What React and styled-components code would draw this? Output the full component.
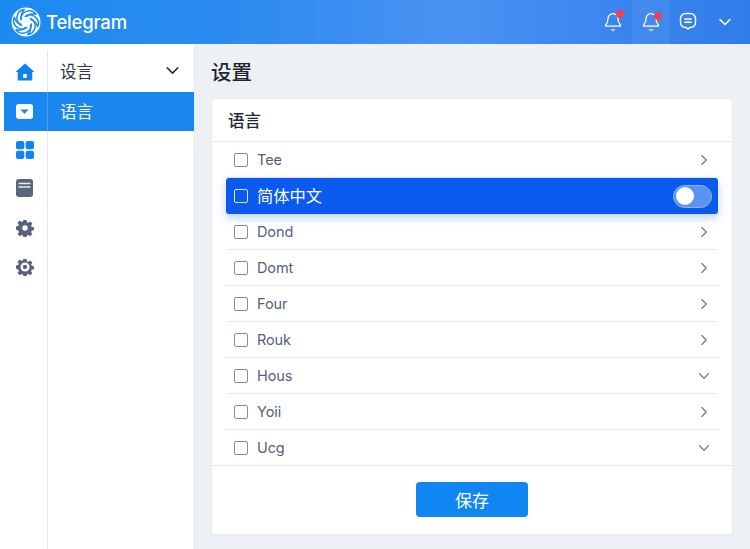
import React from 'react';
import styled, { createGlobalStyle } from 'styled-components';
import { ChevronDown, ChevronRight, Bell } from 'lucide-react';

const Global = createGlobalStyle`
  html, body { margin: 0; padding: 0; }
  body { width: 750px; height: 549px; overflow: hidden; background: #eef1f4; font-family: "Inter", "Noto Sans CJK SC", sans-serif; }
  * { box-sizing: border-box; }
`;
const Page = styled.div`display: flex; flex-direction: column; width: 750px; height: 549px;`;
const Header = styled.header`
  height: 44px; flex: none; display: flex; align-items: center; padding-left: 11px;
  background: linear-gradient(90deg, #1b8bf0 0%, #2f8bf0 35%, #4a92f2 60%, #3d86ef 80%, #2f7dea 100%);
`;
const Brand = styled.div`display: flex; align-items: center; gap: 5px; color: #fff; font-family: "Inter", sans-serif; font-size: 18.5px; font-weight: 500; letter-spacing: -0.2px;`;
const HeaderActions = styled.div`margin-left: auto; display: flex; align-items: stretch; height: 44px; padding-right: 7px;`;
const HeaderBtn = styled.div`
  width: ${p => p.$w}px; position: relative; display: flex; align-items: center; justify-content: center; color: #fff;
  padding-bottom: ${p => p.$lift || 0}px;
  background: ${p => (p.$active ? 'rgba(255,255,255,0.06)' : 'transparent')};
`;
const Dot = styled.span`position: absolute; top: ${p => p.$top}px; left: 22px; width: 8px; height: 8px; border-radius: 50%; background: #ee4058;`;
const Body = styled.div`flex: 1; display: flex; min-height: 0;`;
const Side = styled.aside`width: 195px; flex: none; background: #fff; display: flex; flex-direction: column; padding-top: 7px; border-right: 1px solid #e8ebf1; position: relative;`;
const SideRow = styled.div`
  display: grid; grid-template-columns: 44px 1fr; height: ${p => p.$h}px; margin-left: 4px; align-items: center;
  background: ${p => (p.$active ? '#1a87f0' : 'transparent')}; color: ${p => (p.$active ? '#fff' : '#4b5a70')};
`;
const RailIcon = styled.div`display: flex; justify-content: center; align-items: center; padding-right: 2px; height: 100%; border-right: 1px solid ${p => (p.$active ? '#4ba2f3' : '#e2e7f3')};`;
const SideLabel = styled.div`
  display: flex; align-items: center; justify-content: space-between; padding: 0 11px 2px 12px; height: 100%;
  font-size: 16.5px; color: ${p => (p.$active ? '#fff' : '#2f3541')};
`;
const Main = styled.main`flex: 1; display: flex; flex-direction: column; padding: 14px 18px 15px 17px; min-width: 0;`;
const Title = styled.h1`margin: 0 0 12px -1px; font-size: 20.5px; line-height: 29px; font-weight: 500; color: #20252e;`;
const Card = styled.section`flex: 1; background: #fff; border-radius: 4px; display: flex; flex-direction: column; box-shadow: 0 1px 4px rgba(60,80,120,.06);`;
const CardHead = styled.div`height: 43px; flex: none; padding: 0 16px 1px 16px; display: flex; align-items: center; font-size: 16.5px; font-weight: 500; color: #23272f; border-bottom: 1px solid #e3e7ef;`;
const List = styled.div`flex: 1; padding: 0 14px; display: flex; flex-direction: column;`;
const Row = styled.div`
  height: ${p => (p.$last ? 35 : 36)}px; display: flex; align-items: center; padding: 0 9px 0 8px; gap: 9px; flex: none;
  font-size: 14.5px; color: #545f7c; letter-spacing: -0.1px;
  border-bottom: ${p => (p.$last ? 'none' : '1px solid #e5e8f0')};
  ${p => p.$selected && `
    background: #0a5aef; color: #fff; border: none; border-radius: 3px; font-size: 16.3px; letter-spacing: 0;
    box-shadow: 0 4px 10px rgba(10,92,240,.28);
  `}
`;
const RowText = styled.span`padding-bottom: ${p => (p.$selected ? 3 : 0)}px;`;
const Check = styled.span`width: 14px; height: 14px; flex: none; border-radius: 2px; border: 1.6px solid ${p => (p.$light ? '#dbe7ff' : '#868ca3')};`;
const Grow = styled.span`flex: 1;`;
const Arrow = styled.span`display: flex; color: #6d7487; margin-right: -4px;`;
const Toggle = styled.span`width: 39px; height: 23px; margin-right: -3px; border-radius: 12px; background: #5b93ee; border: 1px solid #8db3f5; display: flex; align-items: center; padding-left: 2px;`;
const Knob = styled.span`width: 18px; height: 18px; border-radius: 50%; background: #fff;`;
const Footer = styled.div`height: 69px; flex: none; border-top: 1px solid #e5e8f0; display: flex; align-items: center; justify-content: center; padding-bottom: 2px;`;
const Save = styled.button`width: 112px; height: 35px; border: none; border-radius: 4px; background: #0f86f2; color: #fff; font-family: inherit; font-size: 17px; padding: 0;`;

const Logo = () => (
  <svg width="30" height="30" viewBox="0 0 30 30">
    <circle cx="15" cy="15" r="14.5" fill="#fff" />
    <g fill="none" stroke="#1b8bf0" strokeWidth="1.500" strokeLinejoin="round">
      {[0, 60, 120, 180, 240, 300].map(a => (
        <path key={a} transform={`rotate(${a} 15 15)`} d="M9.800 13.500C8.800 8.500 13 4 18 3.800C21 3.700 23.500 5 25 7.200C21.500 6.400 17.800 7.200 15.500 9.800" />
      ))}
    </g>
  </svg>
);
const Home = () => (
  <svg width="20" height="18" viewBox="0 0 20 18"><path fill="#0f82ee" d="M10 0.5 19.5 9h-2.200v8.500H2.700V9H.5z" /><rect x="8.200" y="11" width="3.600" height="3.800" fill="#fff" /></svg>
);
const Inbox = () => (
  <svg width="17" height="15" viewBox="0 0 17 15"><rect width="17" height="15" rx="3" fill="#fff" /><path d="M4.500 5.500h8L8.500 10z" fill="#1a87f0" /></svg>
);
const Grid = () => (
  <svg width="18" height="18" viewBox="0 0 18 18" fill="#0f82f5"><rect width="8.300" height="8.300" rx="2" /><rect x="9.700" width="8.300" height="8.300" rx="2" /><rect y="9.700" width="8.300" height="8.300" rx="2" /><rect x="9.700" y="9.700" width="8.300" height="8.300" rx="2" /></svg>
);
const Book = () => (
  <svg width="17" height="18" viewBox="0 0 17 18"><rect width="17" height="18" rx="3" fill="#5a6678" /><path d="M2.500 4.500h12M2.500 8h12" stroke="#e8ebf0" strokeWidth="1.500" /></svg>
);
const gearPath = 'M7.300 0h3.400l.5 2.500 1.500.6 2.100-1.400 2.400 2.400-1.400 2.100.6 1.500 2.500.5v3.400l-2.500.5-.6 1.500 1.400 2.100-2.400 2.400-2.100-1.400-1.500.6-.5 2.500H7.300l-.5-2.500-1.500-.6-2.100 1.400-2.400-2.400 1.400-2.100-.6-1.500L-1 10.700V7.300l2.500-.5.600-1.500L.7 3.200 3.100.8l2.100 1.400 1.500-.6z';
const Gear = ({ hole }) => (
  <svg width="18" height="18" viewBox="-1 -1 20 20">
    <path d={gearPath} fill="#56637a" />
    <circle cx="9" cy="9" r={hole} fill="#fff" />
    {hole > 3.500 && <circle cx="9" cy="9" r="2.400" fill="#56637a" />}
  </svg>
);
const Msg = () => (
  <svg width="18" height="18" viewBox="0 0 18 18" fill="none" stroke="#fff" strokeWidth="1.400" strokeLinecap="round">
    <path d="M6.500 1.500h5a5 5 0 0 1 5 5v4a5 5 0 0 1-5 5h-.7L9 17l-1.800-1.500h-.7a5 5 0 0 1-5-5v-4a5 5 0 0 1 5-5z" />
    <path d="M5.800 7h6.400M5.800 10.200h6.400" strokeWidth="1.600" />
  </svg>
);

const items = [
  ['Tee', 'r'], ['简体中文', 's'], ['Dond', 'r'], ['Domt', 'r'], ['Four', 'r'],
  ['Rouk', 'r'], ['Hous', 'd'], ['Yoii', 'r'], ['Ucg', 'd'],
];

export default function App() {
  return (
    <Page>
      <Global />
      <Header>
        <Brand><Logo />Telegram</Brand>
        <HeaderActions>
          <HeaderBtn $w={38}><Bell size={20} strokeWidth={1.500} /><Dot $top={10} /></HeaderBtn>
          <HeaderBtn $w={38} $active><Bell size={20} strokeWidth={1.500} /><Dot $top={12} /></HeaderBtn>
          <HeaderBtn $w={36} $lift={2}><Msg /></HeaderBtn>
          <HeaderBtn $w={37}><ChevronDown size={20} strokeWidth={1.800} /></HeaderBtn>
        </HeaderActions>
      </Header>
      <Body>
        <Side>
          <SideRow $h={41}><RailIcon><Home /></RailIcon><SideLabel>设言<ChevronDown size={21} strokeWidth={1.800} color="#30343c" /></SideLabel></SideRow>
          <SideRow $h={39} $active><RailIcon $active><Inbox /></RailIcon><SideLabel $active>语言</SideLabel></SideRow>
          <SideRow $h={38}><RailIcon><Grid /></RailIcon><SideLabel /></SideRow>
          <SideRow $h={38}><RailIcon><Book /></RailIcon><SideLabel /></SideRow>
          <SideRow $h={42}><RailIcon><Gear hole={3} /></RailIcon><SideLabel /></SideRow>
          <SideRow $h={36}><RailIcon><Gear hole={5} /></RailIcon><SideLabel /></SideRow>
          <SideRow $h={264}><RailIcon /><SideLabel /></SideRow>
        </Side>
        <Main>
          <Title>设置</Title>
          <Card>
            <CardHead>语言</CardHead>
            <List>
              {items.map(([t, k], i) => (
                <Row key={t} $selected={k === 's'} $last={i === items.length - 1}>
                  <Check $light={k === 's'} />
                  <RowText $selected={k === 's'}>{t}</RowText>
                  <Grow />
                  {k === 's' && <Toggle><Knob /></Toggle>}
                  {k === 'r' && <Arrow><ChevronRight size={18} strokeWidth={1.500} /></Arrow>}
                  {k === 'd' && <Arrow><ChevronDown size={18} strokeWidth={1.500} /></Arrow>}
                </Row>
              ))}
            </List>
            <Footer><Save>保存</Save></Footer>
          </Card>
        </Main>
      </Body>
    </Page>
  );
}
